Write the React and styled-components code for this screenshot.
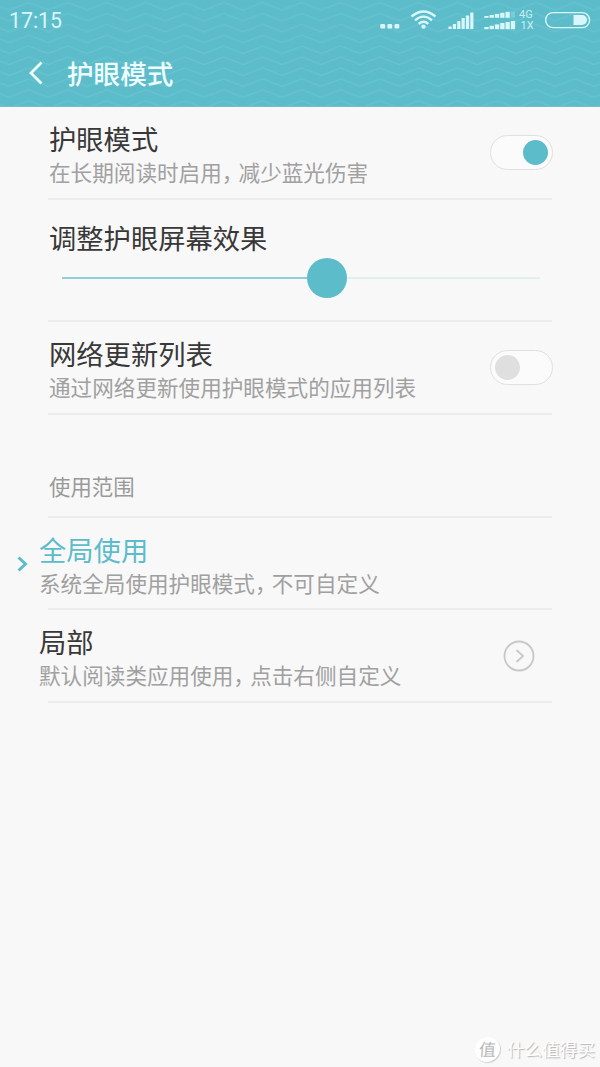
import { useState } from "react";
import styled, { createGlobalStyle } from "styled-components";

const TEAL = "#5cbcca";

const GlobalStyle = createGlobalStyle`
  * {
    box-sizing: border-box;
  }

  body {
    margin: 0;
    background: #f8f8f8;
    font-family: "Noto Sans CJK SC", "Noto Sans", sans-serif;
  }
`;

const Screen = styled.div`
  position: relative;
  width: 600px;
  height: 1067px;
  overflow: hidden;
  background: #f8f8f8;
`;

const Header = styled.header`
  position: relative;
  height: 107px;
  background: ${TEAL};
  border-bottom: 1px solid #78bcc7;
`;

const Waves = styled.svg`
  position: absolute;
  inset: 0;
`;

const StatusBar = styled.div`
  position: relative;
  display: flex;
  align-items: center;
  justify-content: space-between;
  height: 41px;
  padding: 0 10px 0 9px;
`;

const Time = styled.span`
  color: #d9f7fa;
  font-family: Roboto, sans-serif;
  font-size: 21.3px;
  line-height: 41px;
`;

const StatusIcons = styled.svg`
  display: block;
  margin-right: -10px;
`;

const TitleBar = styled.div`
  position: relative;
  display: flex;
  align-items: center;
  height: 64px;
  padding-left: 28px;
`;

const BackIcon = styled.svg`
  margin-right: 23px;
`;

const PageTitle = styled.h1`
  margin: 0;
  color: #effdff;
  font-size: 26.6px;
  font-weight: 500;
  line-height: 36px;
`;

const List = styled.main`
  display: flex;
  flex-direction: column;
  padding: 0 48px;
`;

const Row = styled.section`
  position: relative;
  display: flex;
  justify-content: space-between;
  height: ${({ $height }) => $height}px;
  padding: 14px 0 0 1px;
  border-bottom: 2px solid #ececec;
`;

const OptionRow = styled(Row)`
  margin-left: -9px;
  padding-left: 0;
  border-bottom: 0;

  &::after {
    content: "";
    position: absolute;
    left: 9px;
    right: 0;
    bottom: 0;
    height: 2px;
    background: #ececec;
  }
`;

const SliderRow = styled(Row)`
  flex-direction: column;
  justify-content: flex-start;
  padding-top: 20px;
`;

const SectionLabel = styled(Row)`
  align-items: flex-end;
  padding-bottom: 13px;
  color: #999;
  font-size: 21.4px;
  line-height: 34px;
`;

const Title = styled.div`
  color: ${({ $active }) => ($active ? TEAL : "#383838")};
  font-size: 27.3px;
  line-height: 34px;
  white-space: nowrap;
`;

const Summary = styled.div`
  color: #a0a0a0;
  font-size: 21.6px;
  line-height: 34px;
  white-space: nowrap;
`;

const Comma = styled.span`
  padding-right: 6px;
  font-feature-settings: "halt";
`;

const Switch = styled.button`
  display: flex;
  align-items: center;
  justify-content: ${({ $on }) => ($on ? "flex-end" : "flex-start")};
  width: 63px;
  height: 35px;
  margin: 14px -1px 0 0;
  padding: 0 4px;
  border: 1.5px solid #e0e0e0;
  border-radius: 18px;
  background: #fbfbfb;
`;

const Knob = styled.span`
  width: 25px;
  height: 25px;
  border-radius: 50%;
  background: ${({ $on }) => ($on ? TEAL : "#dfdfdf")};
`;

const Slider = styled.div`
  display: flex;
  align-items: center;
  height: 40px;
  margin: 4px 12px 0 13px;
`;

const Filled = styled.div`
  height: 2px;
  background: #8fcfd8;
`;

const Thumb = styled.div`
  flex: none;
  width: 40px;
  height: 40px;
  border-radius: 50%;
  background: ${TEAL};
`;

const Rest = styled.div`
  flex: 1;
  height: 2px;
  background: #e2efef;
`;

const ActiveMark = styled.svg`
  position: absolute;
  left: -23px;
  top: 37px;
`;

const MoreIcon = styled.svg`
  margin: 16px 17px 0 0;
`;

const Watermark = styled.div`
  position: absolute;
  right: 5px;
  bottom: 4px;
  display: flex;
  align-items: center;
  gap: 7px;
  color: #fff;
  font-size: 17.6px;
  line-height: 28px;
  text-shadow: 1px 1px 1px #b4b4b4;
`;

const Badge = styled.span`
  width: 25px;
  height: 25px;
  border-radius: 50%;
  background: #fff;
  box-shadow: 1px 1px 1px #ccc;
  color: #b8b8b8;
  font-size: 17px;
  line-height: 24px;
  text-align: center;
  text-shadow: none;
  transform: skewX(-4deg);
`;

function HeaderWaves() {
  return (
    <Waves width="600" height="106">
      <defs>
        <pattern id="wave" x="9.2" y="1.6" width="39" height="10.9" patternUnits="userSpaceOnUse">
          <path
            d="M-1 -2.9 L0 -2.5 L19.5 -10 L39 -2.5 L40 -2.9 M-1 8 L0 8.4 L19.5 .9 L39 8.4 L40 8 M-1 18.9 L0 19.3 L19.5 11.8 L39 19.3 L40 18.9"
            fill="none"
            stroke="#67c3cf"
            strokeWidth="1.4"
          />
        </pattern>
      </defs>
      <rect width="600" height="106" fill="url(#wave)" />
    </Waves>
  );
}

// bars that grow from left to right, the last ones can be dimmed
function Bars({ x, bottom, width, step, heights, dim = 0 }) {
  return heights.map((h, i) => (
    <rect
      key={i}
      x={x + i * step}
      y={bottom - h}
      width={width}
      height={h}
      opacity={i >= heights.length - dim ? 0.25 : 1}
    />
  ));
}

function Status() {
  return (
    <StatusIcons width="225" height="41" viewBox="375 0 225 41" fill="#d9f7fa">
      <rect x="380.3" y="24" width="4.8" height="4.6" rx="1.2" />
      <rect x="387.4" y="24" width="4.8" height="4.6" rx="1.2" />
      <rect x="394.5" y="24" width="4.8" height="4.6" rx="1.2" />
      <g fill="none" stroke="#d9f7fa" strokeWidth="2.3">
        <path d="M411.5 16.5 Q423.5 6.5 435.5 16.5" />
        <path d="M415 20.3 Q423.5 13 432 20.3" />
        <path d="M418.6 23.8 Q423.5 19.6 428.4 23.8" />
      </g>
      <circle cx="423.5" cy="26.6" r="2.2" />
      <Bars x={448.5} bottom={29} width={3.2} step={4.35} heights={[2.5, 5, 8, 11, 13.5, 16.5]} />
      <Bars x={484.3} bottom={17.8} width={4.3} step={5.3} heights={[1.8, 2.8, 3.8, 5, 6, 6.5]} dim={1} />
      <Bars x={484.3} bottom={29.2} width={4.3} step={5.3} heights={[2.2, 3.4, 4.8, 6.2, 7.2, 8.2]} />
      <text x="519" y="17.8" fontFamily="Roboto, sans-serif" fontSize="11" opacity="0.85">4G</text>
      <text x="520.5" y="29.2" fontFamily="Roboto, sans-serif" fontSize="11" opacity="0.85">1X</text>
      <rect x="545.6" y="12.6" width="44" height="15" rx="7.5" fill="none" stroke="#d9f7fa" strokeWidth="1.4" />
      <path d="M573.5 15 H582 A5 5 0 0 1 582 25 H573.5 Z" />
    </StatusIcons>
  );
}

function Toggle({ initial }) {
  const [on, setOn] = useState(initial);

  return (
    <Switch $on={on} onClick={() => setOn(!on)}>
      <Knob $on={on} />
    </Switch>
  );
}

export default function App() {
  return (
    <Screen>
      <GlobalStyle />
      <Header>
        <HeaderWaves />
        <StatusBar>
          <Time>17:15</Time>
          <Status />
        </StatusBar>
        <TitleBar>
          <BackIcon width="16" height="24" viewBox="0 0 16 24">
            <path d="M13.5 1.5 L3 12 L13.5 22.5" fill="none" stroke="#effdff" strokeWidth="2.8" />
          </BackIcon>
          <PageTitle>护眼模式</PageTitle>
        </TitleBar>
      </Header>

      <List>
        <Row $height={93}>
          <div>
            <Title>护眼模式</Title>
            <Summary>
              在长期阅读时启用<Comma>，</Comma>减少蓝光伤害
            </Summary>
          </div>
          <Toggle initial={true} />
        </Row>

        <SliderRow $height={122}>
          <Title>调整护眼屏幕效果</Title>
          <Slider>
            <Filled style={{ width: 245 }} />
            <Thumb />
            <Rest />
          </Slider>
        </SliderRow>

        <Row $height={93}>
          <div>
            <Title>网络更新列表</Title>
            <Summary>通过网络更新使用护眼模式的应用列表</Summary>
          </div>
          <Toggle initial={false} />
        </Row>

        <SectionLabel $height={103}>使用范围</SectionLabel>

        <OptionRow $height={92}>
          <div>
            <Title $active>全局使用</Title>
            <Summary>
              系统全局使用护眼模式<Comma>，</Comma>不可自定义
            </Summary>
          </div>
          <ActiveMark width="13" height="18" viewBox="0 0 13 18">
            <path d="M2.5 2.5 L9.5 9 L2.5 15.5" fill="none" stroke={TEAL} strokeWidth="3" />
          </ActiveMark>
        </OptionRow>

        <OptionRow $height={93}>
          <div>
            <Title>局部</Title>
            <Summary>
              默认阅读类应用使用<Comma>，</Comma>点击右侧自定义
            </Summary>
          </div>
          <MoreIcon width="32" height="32" viewBox="0 0 32 32" fill="none" stroke="#c8c8c8">
            <circle cx="16" cy="16" r="14.5" strokeWidth="1.8" />
            <path d="M13.5 10 L20 16 L13.5 22" strokeWidth="1.8" />
          </MoreIcon>
        </OptionRow>
      </List>

      <Watermark>
        <Badge>值</Badge>
        什么值得买
      </Watermark>
    </Screen>
  );
}
